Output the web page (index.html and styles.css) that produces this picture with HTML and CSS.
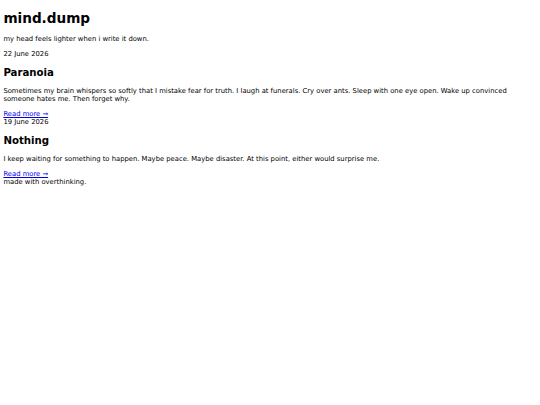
FILE: index.html
```html
<!DOCTYPE html>
<html>
<head>
<meta charset="utf-8">
<title>mind.dump</title>
<link rel="stylesheet" href="styles.css">
</head>
<body>
<header class="site-header">
  <h1 class="site-title">mind.dump</h1>
  <p class="tagline">my head feels lighter when i write it down.</p>
</header>
<main>
  <article class="post">
    <div class="date">22 June 2026</div>
    <h2 class="post-title">Paranoia</h2>
    <p class="excerpt">Sometimes my brain whispers so softly that I mistake fear for truth. I laugh at funerals. Cry over ants. Sleep with one eye open. Wake up convinced someone hates me. Then forget why.</p>
    <a class="more" href="#">Read more →</a>
  </article>
  <article class="post">
    <div class="date">19 June 2026</div>
    <h2 class="post-title">Nothing</h2>
    <p class="excerpt">I keep waiting for something to happen. Maybe peace. Maybe disaster. At this point, either would surprise me.</p>
    <a class="more" href="#">Read more →</a>
  </article>
</main>
<footer class="site-footer">made with overthinking.</footer>
</body>
</html>
```
FILE: styles.css
```css
body {
  margin: 3.4px;
  font-family: "DejaVu Sans", Verdana, sans-serif;
  font-size: 6.8px;
  line-height: 8.3px;
  color: #000;
}
.site-title {
  font-size: 2em;
  line-height: normal;
  margin: 7px 0 9px;
}
.tagline {
  margin: 1em 0;
}
.post-title {
  font-size: 1.5em;
  line-height: 12px;
  margin: 8.5px 0 7.5px;
}
.excerpt {
  margin: 1em 0;
}
.more {
  color: #0000ee;
}
```
